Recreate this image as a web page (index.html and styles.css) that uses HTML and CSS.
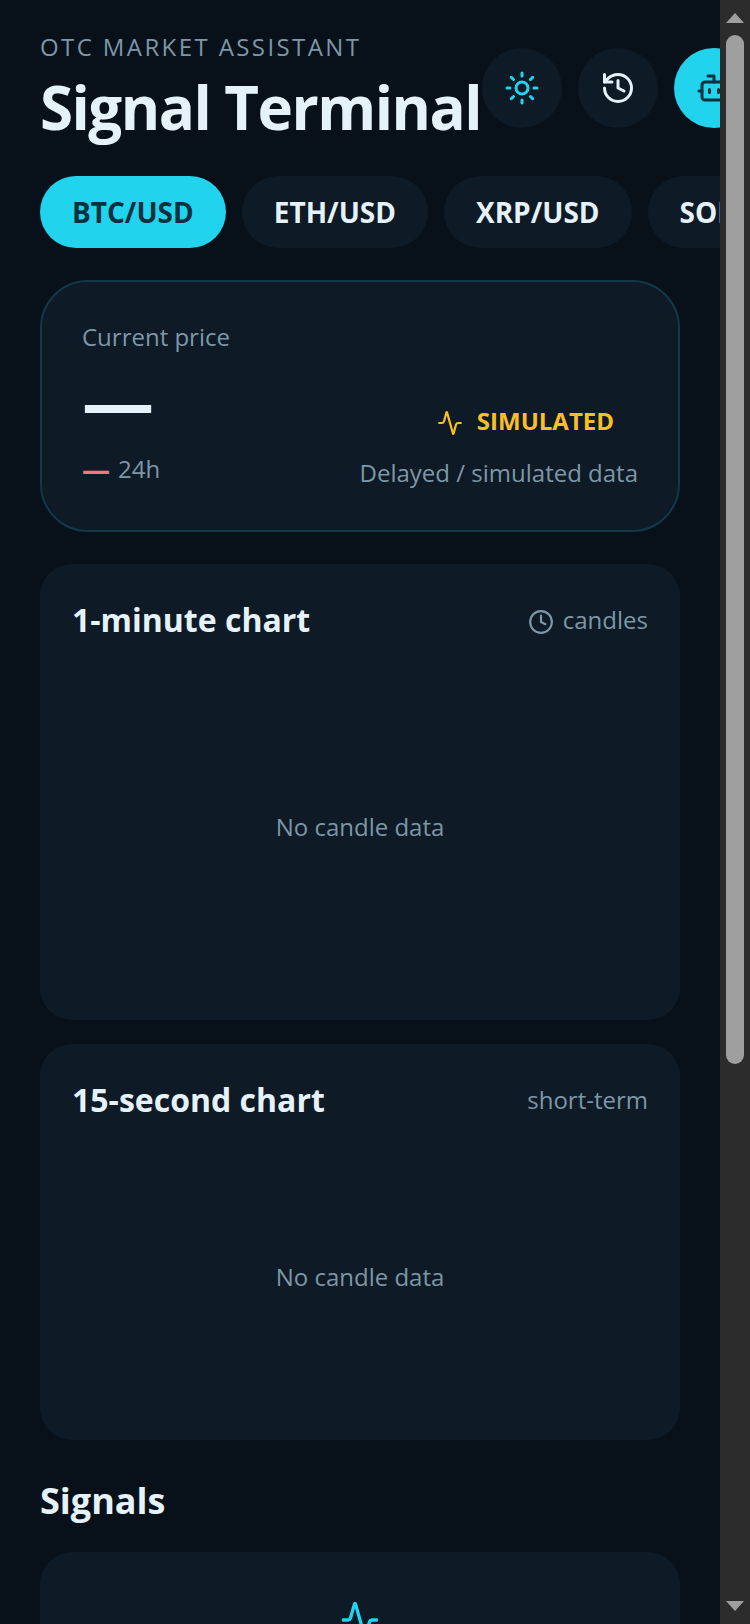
FILE: index.html

```html
<!DOCTYPE html>
<html lang="en">
<head>
  <meta charset="UTF-8" />
  <meta name="viewport" content="width=device-width, initial-scale=1.0" />
  <title>Signal Terminal</title>
  <link rel="stylesheet" href="styles.css">
</head>
<body>
  <div class="window">
    <div class="app">
      <header class="top">
        <div class="brand">
          <p class="eyebrow">OTC MARKET ASSISTANT</p>
          <h1>Signal Terminal</h1>
        </div>
        <div class="top-actions">
          <button class="round-btn sun">
            <svg viewBox="0 0 24 24"><circle cx="12" cy="12" r="4"/><path d="M12 2v2M12 20v2M4.93 4.93l1.41 1.41M17.66 17.66l1.41 1.41M2 12h2M20 12h2M6.34 17.66l-1.41 1.41M19.07 4.93l-1.41 1.41"/></svg>
          </button>
          <button class="round-btn">
            <svg viewBox="0 0 24 24"><path d="M3 12a9 9 0 1 0 9-9 9.75 9.75 0 0 0-6.74 2.74L3 8"/><path d="M3 3v5h5"/><path d="M12 7v5l4 2"/></svg>
          </button>
          <button class="round-btn active">
            <svg viewBox="0 0 24 24"><path d="M12 8V4H8"/><rect width="16" height="12" x="4" y="8" rx="2"/><path d="M2 14h2M20 14h2M15 13v2M9 13v2"/></svg>
          </button>
        </div>
      </header>

      <div class="pairs">
        <button class="pill selected">BTC/USD</button>
        <button class="pill">ETH/USD</button>
        <button class="pill">XRP/USD</button>
        <button class="pill">SOL/USD</button>
      </div>

      <section class="price-card">
        <p class="price-label">Current price</p>
        <div class="price-row">
          <div>
            <div class="price">—</div>
            <div class="change"><span class="change-dash">—</span>24h</div>
          </div>
          <div class="price-side">
            <div class="sim-badge">
              <svg viewBox="0 0 24 24"><path d="M22 12h-2.48a2 2 0 0 0-1.93 1.46l-2.35 8.36a.25.25 0 0 1-.48 0L9.24 2.18a.25.25 0 0 0-.48 0l-2.35 8.36A2 2 0 0 1 4.49 12H2"/></svg>
              SIMULATED
            </div>
            <div class="sim-note">Delayed / simulated data</div>
          </div>
        </div>
      </section>

      <section class="chart-card tall">
        <div class="chart-head">
          <h2>1-minute chart</h2>
          <span class="chart-meta">
            <svg viewBox="0 0 24 24"><circle cx="12" cy="12" r="10"/><path d="M12 6v6l4 2"/></svg>
            candles
          </span>
        </div>
        <div class="chart-empty">No candle data</div>
      </section>

      <section class="chart-card short">
        <div class="chart-head">
          <h2>15-second chart</h2>
          <span class="chart-meta">short-term</span>
        </div>
        <div class="chart-empty">No candle data</div>
      </section>

      <h2 class="section-title">Signals</h2>
      <section class="signals-card">
        <svg viewBox="0 0 24 24"><path d="M22 12h-2.48a2 2 0 0 0-1.93 1.46l-2.35 8.36a.25.25 0 0 1-.48 0L9.24 2.18a.25.25 0 0 0-.48 0l-2.35 8.36A2 2 0 0 1 4.49 12H2"/></svg>
      </section>
    </div>

    <div class="scrollbar">
      <div class="arrow up"></div>
      <div class="thumb-track"><div class="thumb"></div></div>
      <div class="arrow down"></div>
    </div>
  </div>
</body>
</html>
```

FILE: styles.css

```css
* { box-sizing: border-box; }
html, body { margin: 0; padding: 0; height: 100%; overflow: hidden; }
body { font-family: "Open Sans", "Noto Sans", sans-serif; background: #08111a; color: #e6f2f9; }
svg { fill: none; stroke: currentColor; stroke-width: 2; stroke-linecap: round; stroke-linejoin: round; }
button { font-family: inherit; border: none; padding: 0; }
p, h1, h2 { margin: 0; }

.window { display: flex; height: 100vh; }
.app { flex: 1; min-width: 0; overflow: hidden; padding: 32px 40px 0; }

/* drawn by hand, the capture hides real scrollbars */
.scrollbar { width: 30px; flex-shrink: 0; background: #2c2c2c; display: flex; flex-direction: column; }
.thumb-track { flex: 1; padding: 5px 6px; }
.thumb { height: 1029px; background: #9f9f9f; border-radius: 9px; }
.arrow { height: 30px; display: flex; justify-content: center; padding-top: 13px; }
.arrow::before { content: ""; border-left: 9px solid transparent; border-right: 9px solid transparent; }
.arrow.up::before { height: 0; border-bottom: 10px solid #9f9f9f; }
.arrow.down { padding-top: 7px; }
.arrow.down::before { height: 0; border-top: 10px solid #9f9f9f; }

.top { display: flex; align-items: flex-start; width: 640px; }
.brand { flex-shrink: 0; }
.eyebrow { font-size: 24px; line-height: 30px; letter-spacing: 2.4px; color: #7d97a7; }
h1 { font-size: 60px; line-height: 84px; letter-spacing: -1.5px; margin-top: 3px; margin-bottom: 1px; font-weight: 700; }
.top-actions { display: flex; gap: 16px; flex-shrink: 0; margin-top: 16px; margin-left: 1px; }
.round-btn {
  width: 80px;
  height: 80px;
  border-radius: 50%;
  background: #0e1a25;
  color: #e6f2f9;
  display: flex;
  align-items: center;
  justify-content: center;
  flex-shrink: 0;
}
.round-btn svg { width: 36px; height: 36px; }
.round-btn.sun { color: #22d3ee; }
.round-btn.active { background: #22d3ee; color: #06303d; }

.pairs { display: flex; gap: 16px; margin-top: 26px; width: 680px; overflow: hidden; }
.pill {
  flex-shrink: 0;
  height: 72px;
  padding: 0 32px;
  border-radius: 36px;
  background: #0e1a25;
  color: #e6f2f9;
  font-size: 28px;
  font-weight: 700;
}
.pill.selected { background: #22d3ee; color: #06303d; }

.price-card {
  margin-top: 32px;
  height: 252px;
  padding: 40px;
  border: 2px solid #12394a;
  border-radius: 48px;
  background: #0e1a25;
}
.price-label { font-size: 24px; line-height: 30px; color: #7d97a7; }
.price-row { display: flex; justify-content: space-between; align-items: flex-start; }
.price { font-size: 72px; line-height: 88px; font-weight: 700; margin-top: 4px; }
.change { display: flex; align-items: center; gap: 8px; font-size: 24px; line-height: 32px; color: #7d97a7; margin-top: 9px; }
.change-dash { font-size: 28px; color: #fb7185; font-weight: 700; }
.price-side { margin-top: 52px; text-align: right; }
.sim-badge {
  display: flex;
  align-items: center;
  justify-content: flex-end;
  gap: 14px;
  padding-right: 24px;
  font-size: 24px;
  font-weight: 700;
  color: #fbbf24;
  margin-bottom: 20px;
}
.sim-badge svg { width: 26px; height: 26px; margin-top: 4px; }
.sim-note { font-size: 24px; line-height: 32px; color: #7d97a7; }

.chart-card { border-radius: 32px; background: #0e1a25; padding: 34px 32px 32px; display: flex; flex-direction: column; }
.chart-card.tall { height: 456px; margin-top: 32px; }
.chart-card.short { height: 396px; margin-top: 24px; }
.chart-head { display: flex; justify-content: space-between; align-items: center; }
.chart-head h2 { font-size: 32px; line-height: 44px; font-weight: 700; }
.chart-meta { display: flex; align-items: center; gap: 9px; margin-top: -2px; font-size: 24px; color: #7d97a7; }
.chart-meta svg { width: 26px; height: 26px; margin-top: 6px; }
.chart-empty { flex: 1; display: flex; align-items: center; justify-content: center; padding-top: 23px; font-size: 24px; color: #7d97a7; }

.section-title { font-size: 36px; line-height: 48px; font-weight: 700; margin-top: 37px; }
.signals-card {
  margin-top: 27px;
  height: 780px;
  padding-top: 48px;
  border-radius: 32px;
  background: #0e1a25;
  color: #22d3ee;
  text-align: center;
}
.signals-card svg { width: 40px; height: 40px; }
```
